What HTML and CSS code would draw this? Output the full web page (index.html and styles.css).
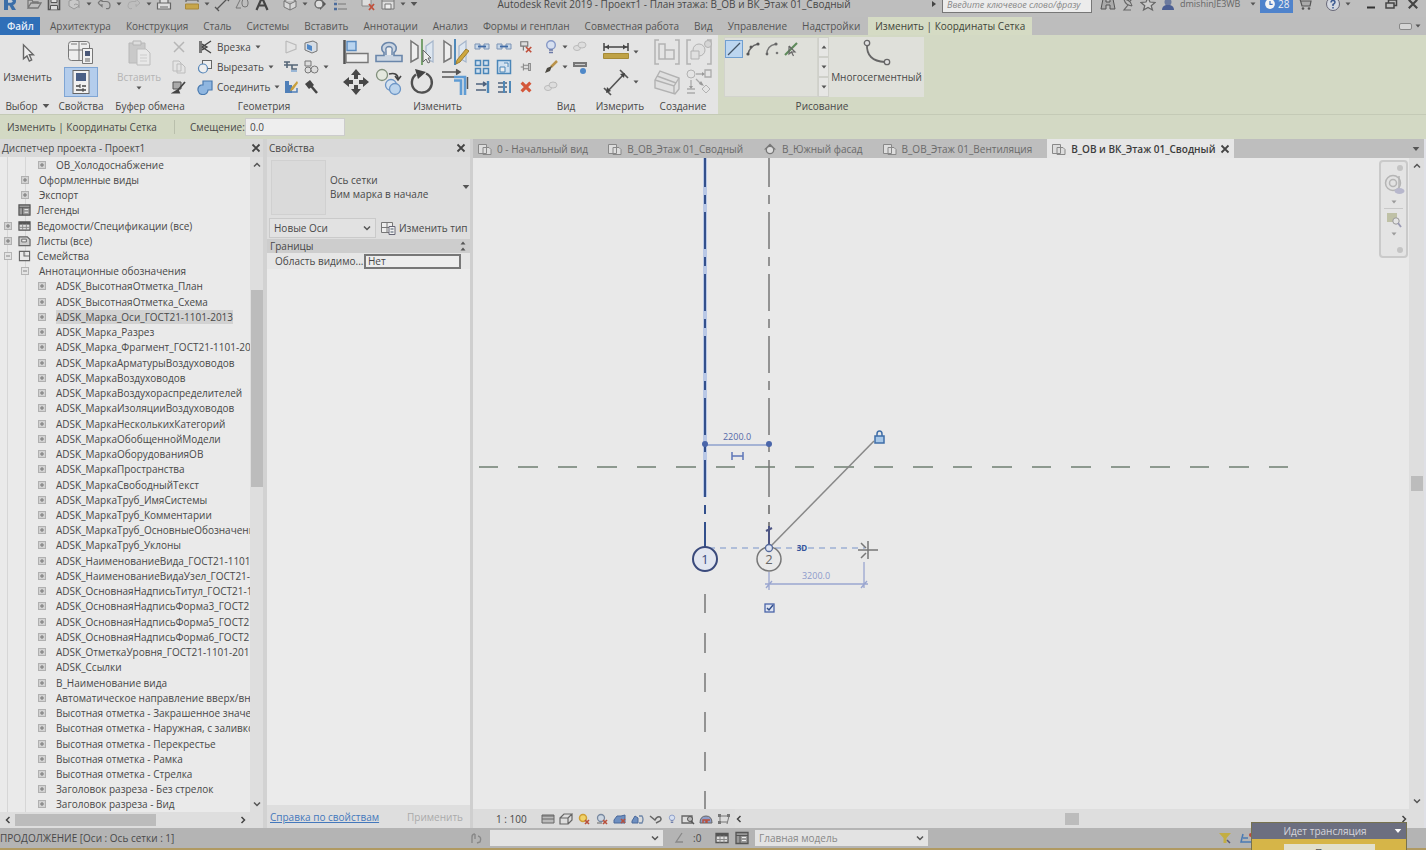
FILE: index.html
```html
<!DOCTYPE html>
<html lang="ru">
<head>
<meta charset="utf-8">
<title>Autodesk Revit 2019 - Проект1</title>
<link rel="stylesheet" href="styles.css">
</head>
<body>
<svg class="sprite" aria-hidden="true">
  <symbol id="caret" viewBox="0 0 6 6"><path d="M0.5 1.5h5L3 4.5z" fill="#555"/></symbol>
  <symbol id="chev-d" viewBox="0 0 8 8"><path d="M1 2.5l3 3 3-3" fill="none" stroke="#555" stroke-width="1.5"/></symbol>
  <symbol id="chev-u" viewBox="0 0 8 8"><path d="M1 5.5l3-3 3 3" fill="none" stroke="#555" stroke-width="1.5"/></symbol>
  <symbol id="chev-l" viewBox="0 0 8 8"><path d="M5.5 1l-3 3 3 3" fill="none" stroke="#444" stroke-width="1.5"/></symbol>
  <symbol id="chev-r" viewBox="0 0 8 8"><path d="M2.5 1l3 3-3 3" fill="none" stroke="#444" stroke-width="1.5"/></symbol>
  <symbol id="x" viewBox="0 0 10 10"><path d="M1.5 1.5l7 7M8.500 1.500l-7 7" stroke="#444" stroke-width="1.8"/></symbol>
  <symbol id="play" viewBox="0 0 8 8"><path d="M2 1l4 3-4 3z" fill="#444"/></symbol>
  <symbol id="plus" viewBox="0 0 8 8"><rect x=".5" y=".5" width="7" height="7" fill="#d2d2d2" stroke="#b0b0b0"/><path d="M2 4h4M4 2v4" stroke="#777"/></symbol>
  <symbol id="minus" viewBox="0 0 8 8"><rect x=".5" y=".5" width="7" height="7" fill="#e4e4e4" stroke="#b4b4b4"/><path d="M2 4h4" stroke="#888"/></symbol>

  <symbol id="logo" viewBox="0 0 16 16"><path d="M2 1h8q4 0 4 4 0 3-3 4l3 5h-4L7.500 9.500H6V14H2z" fill="#3b6ea8"/><path d="M6 4h3q1.500 0 1.500 1.300T9 6.800H6z" fill="#c6cfd8"/></symbol>
  <symbol id="open" viewBox="0 0 16 16"><path d="M2 12V4h4l1 2h5v2M2 12l3-5h10l-3 5z" fill="none" stroke="#777" stroke-width="1.3"/></symbol>
  <symbol id="save" viewBox="0 0 16 16"><path d="M2.500 2.500h11v11h-11z" fill="#b9b9b9" stroke="#555" stroke-width="1.600"/><path d="M5 2.500v4h6v-4M4.500 13.500V9.500h7v4" fill="#ddd" stroke="#555"/></symbol>
  <symbol id="sync" viewBox="0 0 16 16"><path d="M3 5l5-2 5 2v5l-5 3-5-3z" fill="#c9c9c9" stroke="#999"/><path d="M8 9a3 3 0 015 3" fill="none" stroke="#999"/></symbol>
  <symbol id="undo" viewBox="0 0 16 16"><path d="M2 7l4-4v2.500h4q4 0 4 4t-4 3M2 7l4 3.500V8" fill="none" stroke="#777" stroke-width="1.200"/></symbol>
  <symbol id="redo" viewBox="0 0 16 16"><path d="M14 7l-4-4v2.500H6q-4 0-4 4t4 3M14 7l-4 3.500V8" fill="none" stroke="#aaa"/></symbol>
  <symbol id="print" viewBox="0 0 16 16"><path d="M4 7V2h8v5M1.500 7h13v6h-13z" fill="#ddd" stroke="#666" stroke-width="1.200"/><path d="M4 11h8" stroke="#666"/></symbol>
  <symbol id="ruler" viewBox="0 0 16 16"><path d="M2 4h12M2 2v4M14 2v4" stroke="#555"/><path d="M1.500 8h13v5h-13z" fill="#c7a64b" stroke="#a8883a"/></symbol>
  <symbol id="dim" viewBox="0 0 16 16"><path d="M3 13L13 3M1 11l4 4M11 1l4 4" stroke="#555" stroke-width="1.300"/></symbol>
  <symbol id="tag" viewBox="0 0 16 16"><path d="M2 12l4-8M2 12h5" stroke="#777" fill="none"/><rect x="8" y="3" width="6" height="8" rx="3" fill="none" stroke="#777"/></symbol>
  <symbol id="letter" viewBox="0 0 16 16"><path d="M2.500 14L8 1.500 13.500 14M5 9.500h6" fill="none" stroke="#444" stroke-width="2.200"/></symbol>
  <symbol id="cube" viewBox="0 0 16 16"><path d="M2 5l6-3 6 3v6l-6 3-6-3zM2 5l6 3 6-3M8 8v6" fill="#d7d7d7" stroke="#777"/></symbol>
  <symbol id="section" viewBox="0 0 16 16"><path d="M8 2l6 6-6 6z" fill="#555"/><circle cx="7" cy="8" r="4" fill="#ddd" stroke="#666" stroke-width="1.300"/></symbol>
  <symbol id="thin" viewBox="0 0 16 16"><path d="M2 3h3M2 8h3M2 13h3" stroke="#4c6c9c" stroke-width="2.500"/><path d="M6 3h9M6 8h8M6 13h9" stroke="#777"/></symbol>
  <symbol id="closewin" viewBox="0 0 16 16"><path d="M2 3h9v7H2z" fill="#ddd" stroke="#888"/><path d="M9 8l5 6M14 8l-5 6" stroke="#c0503c" stroke-width="1.800"/></symbol>
  <symbol id="switchwin" viewBox="0 0 16 16"><path d="M2 2h12v11H2z" fill="#ddd" stroke="#777"/><path d="M2 5h12M5 8h6v5H5z" fill="#eee" stroke="#777"/></symbol>
  <symbol id="binoc" viewBox="0 0 16 16"><path d="M3 3h3v3h4V3h3l2 10h-5V9H6v4H1z" fill="#aaa" stroke="#555"/></symbol>
  <symbol id="dish" viewBox="0 0 16 16"><path d="M4 3q1 6 8 7M4 3q7 1 8 7M8 9l-4 5h7M10 5l3-3" fill="none" stroke="#666" stroke-width="1.200"/></symbol>
  <symbol id="star" viewBox="0 0 16 16"><path d="M8 1.500l2 4.500 5 .5-3.800 3.200L12.500 14 8 11.500 3.500 14l1.300-4.300L1 6.500 6 6z" fill="#ccc" stroke="#666" stroke-width="1.200"/></symbol>
  <symbol id="user" viewBox="0 0 16 16"><circle cx="8" cy="6" r="3.500" fill="#6c7a9e"/><path d="M2 14q0-4 4-5h4q4 1 4 5z" fill="#4b5e93"/></symbol>
  <symbol id="clock" viewBox="0 0 16 16"><circle cx="8" cy="8" r="6.500" fill="#f4f4f4"/><path d="M8 4v4.500h3.500" fill="none" stroke="#3f72c0" stroke-width="1.600"/></symbol>
  <symbol id="cart" viewBox="0 0 16 16"><path d="M1 3h2l2 7h8l1-5H4" fill="#aaa" stroke="#555" stroke-width="1.200"/><circle cx="6" cy="12.500" r="1.300" fill="#555"/><circle cx="12" cy="12.500" r="1.300" fill="#555"/></symbol>
  <symbol id="help" viewBox="0 0 16 16"><circle cx="8" cy="8" r="6.500" fill="#d4d8e0" stroke="#667"/><path d="M6 6.500q0-2 2-2t2 1.800Q10 7.500 8 8.500V10M8 11v1.500" fill="none" stroke="#3c5a90" stroke-width="1.500"/></symbol>
  <symbol id="min" viewBox="0 0 16 16"><path d="M4 11.500h8" stroke="#333" stroke-width="2"/></symbol>
  <symbol id="restore" viewBox="0 0 16 16"><path d="M3 7h8v5H3zM5.500 7V4h8v5.500H11" fill="none" stroke="#444" stroke-width="1.500"/></symbol>

  <symbol id="cursor" viewBox="0 0 20 24"><path d="M7 5v12l3-2.500 2 4.500 2-1-2-4.500h3.500z" fill="#eee" stroke="#666" stroke-width="1.200"/></symbol>
  <symbol id="famtype" viewBox="0 0 28 26"><rect x="1.500" y="2.500" width="21" height="19" rx="3" fill="#eee" stroke="#777"/><path d="M12 2.500v19M1.500 11h21M4 5h6M14 5h6" stroke="#777" fill="none"/><path d="M15.500 9.500h10v15h-10z" fill="#f1f1f1" stroke="#777"/><path d="M18 12h5v5h-5z" fill="#4a5878"/><path d="M18 20h5M18 22h5" stroke="#666"/></symbol>
  <symbol id="props" viewBox="0 0 28 28"><rect x="6" y="2.500" width="16" height="23" fill="#f1f1f1" stroke="#666"/><path d="M9 5h10v8H9z" fill="#4a5f86"/><path d="M9 18h4M15 18h4M9 22h10" stroke="#444" stroke-width="1.300"/><path d="M13 16v4M16 20v4" stroke="#444"/></symbol>
  <symbol id="paste" viewBox="0 0 26 28"><path d="M3 4h16v20H3z" fill="#c9c9c9" stroke="#b8b8b8"/><path d="M7 2h8v4H7z" fill="#ddd" stroke="#b5b5b5"/><path d="M11 10h9l4 4v12H11z" fill="#e8e8e8" stroke="#bcbcbc"/><path d="M14 16h7M14 19h7M14 22h7" stroke="#ccc"/></symbol>
  <symbol id="cutx" viewBox="0 0 16 16"><path d="M3 3l10 10M13 3L3 13" stroke="#b6b6b6" stroke-width="1.500"/></symbol>
  <symbol id="copyg" viewBox="0 0 16 16"><path d="M2 2h6l2 2v8H2zM6 5h5l3 3v6H6z" fill="#e4e4e4" stroke="#bcbcbc"/></symbol>
  <symbol id="match" viewBox="0 0 16 16"><path d="M2 3h8v7H2z" fill="#aaa" stroke="#555"/><path d="M14 3l-7 8M7 11l-4 2.500h5z" stroke="#444" stroke-width="1.800" fill="#555"/></symbol>
  <symbol id="cope" viewBox="0 0 16 16"><path d="M2 2h3v12H2z" fill="#777"/><path d="M5 8l9-6M5 8l9 6M5 5l5 3-5 3" fill="#999" stroke="#444" stroke-width="1.400"/></symbol>
  <symbol id="cutgeo" viewBox="0 0 16 16"><rect x="5.500" y="1.500" width="9" height="8" fill="#eee" stroke="#666"/><circle cx="6" cy="9.500" r="4.500" fill="#eee" stroke="#5686b8" stroke-width="1.200"/></symbol>
  <symbol id="join" viewBox="0 0 16 16"><path d="M6 2h9v9h-4a5 5 0 11-7-5h2z" fill="#8fb6e0" stroke="#4b7bb0" stroke-width="1.200"/></symbol>
  <symbol id="face" viewBox="0 0 16 16"><path d="M3 2v12M3 2l10 4v4L3 14" fill="none" stroke="#bbb" stroke-width="1.200"/></symbol>
  <symbol id="cubeblue" viewBox="0 0 16 16"><path d="M2 4l8-2 4 2v8l-5 2-7-3z" fill="#d6dde5" stroke="#777"/><path d="M4 5l5 2v5l-5-2z" fill="#4f88c8"/></symbol>
  <symbol id="beam" viewBox="0 0 16 16"><path d="M1 3h6M1 6h14M4 3v6M9 6v4h5" fill="none" stroke="#567" stroke-width="1.600"/><path d="M8 12h6" stroke="#4f88c8"/></symbol>
  <symbol id="shapes" viewBox="0 0 16 16"><path d="M2 2h6v5H2z" fill="#ddd" stroke="#777"/><circle cx="5" cy="11" r="3" fill="#ddd" stroke="#777"/><circle cx="11.500" cy="10.500" r="3.500" fill="#ddd" stroke="#777"/></symbol>
  <symbol id="paint" viewBox="0 0 16 16"><path d="M2 2h4v4h3v8H2z" fill="#4f7fb8"/><path d="M7 13h7V9" fill="none" stroke="#4f7fb8" stroke-width="1.500"/><path d="M14 2L8 9l-1 3 3-1 5-7z" fill="#c9a03c"/></symbol>
  <symbol id="hammer" viewBox="0 0 16 16"><path d="M2 5l5-4 4 5-5 4z" fill="#444"/><path d="M8 7l6 7" stroke="#444" stroke-width="2.500"/></symbol>

  <symbol id="align" viewBox="0 0 28 28"><path d="M2.500 2v24" stroke="#555" stroke-width="2.500"/><path d="M5 3.500h9v9H5z" fill="#b9d4ef" stroke="#5a8bc0" stroke-width="1.400"/><path d="M4 15.500h22v9H4z" fill="#eee" stroke="#777" stroke-width="1.400"/></symbol>
  <symbol id="offset" viewBox="0 0 28 28"><path d="M1 17.500h8v-3q-3-2-2-6 2-4 7-4t7 4q1 4-2 6v3h8v6H1z" fill="#ccd6e2" stroke="#6a86aa" stroke-width="1.600"/><path d="M11 17v-4q-1-4 3-4.500 4 .5 3 4.500v4" fill="#eee" stroke="#6a86aa" stroke-width="1.400"/></symbol>
  <symbol id="mirpick" viewBox="0 0 28 28"><path d="M3 3l7 5v12l-7 4z" fill="#eee" stroke="#777" stroke-width="1.500"/><path d="M25 3l-7 5v12l7 4z" fill="#dde6f0" stroke="#a5b6cb" stroke-width="1.200"/><path d="M14 1v26" stroke="#6c9a62" stroke-width="1.800"/><path d="M15 12v12l3-3 2 4 2-1-2-4h3z" fill="#eee" stroke="#666"/></symbol>
  <symbol id="mirdraw" viewBox="0 0 28 28"><path d="M3 3l7 5v12l-7 4z" fill="#eee" stroke="#777" stroke-width="1.500"/><path d="M25 3l-7 5v12l7 4z" fill="#dde6f0" stroke="#a5b6cb" stroke-width="1.200"/><path d="M14 1v26" stroke="#4f88b8" stroke-width="2"/><path d="M25 11l3 2-9 11-4 2 1-4z" fill="#cfa83d" stroke="#9a7d35"/></symbol>
  <symbol id="move" viewBox="0 0 28 28"><path d="M14 1l5 6h-3v4h-4V7H9zM14 27l5-6h-3v-4h-4v4H9zM1 14l6-5v3h4v4H7v3zM27 14l-6-5v3h-4v4h4v3z" fill="#484848"/></symbol>
  <symbol id="copyb" viewBox="0 0 28 28"><circle cx="7" cy="7" r="5.500" fill="#e4e8de" stroke="#81907c" stroke-width="1.300"/><path d="M14 6q9-2 9 5M20 8l3 4 3-4" fill="none" stroke="#444" stroke-width="1.600"/><circle cx="16" cy="17" r="5.500" fill="#d5e2f0" stroke="#6c95c5" stroke-width="1.300"/><circle cx="20" cy="21" r="5.500" fill="#bcd4ec" stroke="#6c95c5" stroke-width="1.300"/></symbol>
  <symbol id="rotate" viewBox="0 0 28 28"><path d="M18 5.500A10 10 0 118 6.500" fill="none" stroke="#505050" stroke-width="2.400"/><path d="M7 1l11 3-8 7z" fill="#444"/></symbol>
  <symbol id="trim" viewBox="0 0 28 28"><path d="M1 9h14M12 4h2M1 4h13l4 0" stroke="#555" stroke-width="1.700"/><path d="M13 9h11v18M13 12.500h7V27" fill="none" stroke="#5f9cd4" stroke-width="2.600"/><path d="M26.500 9v12M15 1.500L19 4l-4 2.500" stroke="#555" stroke-width="1.500" fill="#555"/></symbol>
  <symbol id="split" viewBox="0 0 16 16"><path d="M1 5h5v5H1zM10 5h5v5h-5z" fill="#c9d8e8" stroke="#7a93b5"/><path d="M4 7.500h8" stroke="#3f6aa5" stroke-width="1.800"/></symbol>
  <symbol id="unpinx" viewBox="0 0 16 16"><path d="M2 2h8v5H2zM5 7v5" fill="#ddd" stroke="#777" stroke-width="1.300"/><path d="M8 8l6 6M14 8l-6 6" stroke="#c0503c" stroke-width="2"/></symbol>
  <symbol id="array" viewBox="0 0 16 16"><path d="M1.500 1.500h5v5h-5zM9.500 1.500h5v5h-5zM1.500 9.500h5v5h-5zM9.500 9.500h5v5h-5z" fill="#cfe0f0" stroke="#4b86b8" stroke-width="1.500"/></symbol>
  <symbol id="scale" viewBox="0 0 16 16"><path d="M1.500 1.500h13v13h-13z" fill="#cfe0f0" stroke="#4b86b8" stroke-width="1.500"/><path d="M4 8h5v5H4zM8 4h4v4" fill="#eee" stroke="#4b86b8"/></symbol>
  <symbol id="pin" viewBox="0 0 16 16"><path d="M2 8h3M5 4v8M5 6h6v4H5M11 4v8h2V4z" fill="#ddd" stroke="#888" stroke-width="1.200"/></symbol>
  <symbol id="trim1" viewBox="0 0 16 16"><path d="M2 5h9M2 11h10M9 3l3 2-3 2" fill="none" stroke="#4d617c" stroke-width="1.600"/><path d="M14 2v12" stroke="#4f88b8" stroke-width="2.400"/></symbol>
  <symbol id="trim2" viewBox="0 0 16 16"><path d="M2 4h9M2 8h9M2 13h9" fill="none" stroke="#4d617c" stroke-width="1.600"/><path d="M14 2v12M8 2v12" stroke="#4f88b8" stroke-width="2"/></symbol>
  <symbol id="redx" viewBox="0 0 16 16"><path d="M3 3l10 10M13 3L3 13" stroke="#d4573a" stroke-width="3.600"/></symbol>
  <symbol id="bulb" viewBox="0 0 16 16"><circle cx="8" cy="6" r="4.300" fill="#d7e0f0" stroke="#8698c6" stroke-width="1.400"/><path d="M6 11h4M6 13.500h4" stroke="#6c7aa6" stroke-width="1.600"/></symbol>
  <symbol id="chain" viewBox="0 0 16 16"><ellipse cx="5" cy="9" rx="3.500" ry="2.500" fill="#ddd" stroke="#bbb"/><ellipse cx="10" cy="6" rx="4" ry="3" fill="#ddd" stroke="#bbb"/></symbol>
  <symbol id="brush" viewBox="0 0 16 16"><path d="M14 2l-6 6" stroke="#b9924a" stroke-width="2.500"/><path d="M9 7l-2 5-5 2 2-5z" fill="#4d4a42"/></symbol>
  <symbol id="linework" viewBox="0 0 16 16"><path d="M1 3h14v5H1z" fill="#777"/><path d="M3 5.500h10" stroke="#ccc"/><circle cx="11" cy="12" r="3" fill="#4f88c8"/></symbol>
  <symbol id="bigruler" viewBox="0 0 28 28"><path d="M2 9h24M2 5v8M26 5v8" stroke="#444" stroke-width="1.500"/><path d="M3 9l4-2.500v5zM25 9l-4-2.500v5z" fill="#444"/><path d="M1.500 15.500h25v5h-25z" fill="#bfa246" stroke="#a58a36"/></symbol>
  <symbol id="bigdim" viewBox="0 0 28 28"><path d="M5 24L22 6M2 20l7 7M18 2l8 8" stroke="#555" stroke-width="1.700"/><path d="M4 25l1-6 4 4zM23 5l-5 1 4 4z" fill="#444"/></symbol>
  <symbol id="asm" viewBox="0 0 28 28"><path d="M6 2H2v24h4M22 2h4v24h-4M6 6h6v6h9v9H6zM12 12v9" fill="none" stroke="#b2b2b2" stroke-width="1.500"/></symbol>
  <symbol id="group" viewBox="0 0 28 28"><path d="M6 2H2v24h4M22 2h4v24h-4" fill="none" stroke="#b2b2b2" stroke-width="1.500"/><circle cx="14" cy="12" r="6" fill="#e0e0e0" stroke="#b2b2b2"/><path d="M6 13h8v8H6z" fill="#e0e0e0" stroke="#b2b2b2"/><circle cx="23" cy="6" r="3.500" fill="#d5d5d5" stroke="#b2b2b2"/></symbol>
  <symbol id="parts" viewBox="0 0 28 28"><path d="M2 12l5-9 19 7v11l-4 5-20-6z" fill="#e0e0e0" stroke="#b2b2b2" stroke-width="1.400"/><path d="M2 12l19 6 5-8M21 18v8M4 8l19 7" fill="none" stroke="#b2b2b2" stroke-width="1.400"/></symbol>
  <symbol id="similar" viewBox="0 0 28 28"><circle cx="6" cy="6" r="4" fill="none" stroke="#b2b2b2"/><path d="M20 2h6v7h-6zM11 6h7M6 12v7M11 11l6 6M2 21h8M2 25h8" fill="none" stroke="#aaa" stroke-width="1.300"/><path d="M21 17l4 4-4 4-4-4z" fill="none" stroke="#b2b2b2"/><path d="M17 4l3 2-3 2zM4 18l2 3 2-3zM16 13l3 5-5-2z" fill="#999"/></symbol>
  <symbol id="dline" viewBox="0 0 16 16"><path d="M2 14L14 2" stroke="#456" stroke-width="1.300"/></symbol>
  <symbol id="darc" viewBox="0 0 16 16"><path d="M3 14Q4 5 13 3" fill="none" stroke="#666" stroke-width="1.400"/><circle cx="3" cy="13" r="1.600" fill="#555"/><circle cx="6" cy="6" r="1.500" fill="#555"/><circle cx="13" cy="3" r="1.600" fill="#555"/></symbol>
  <symbol id="darc2" viewBox="0 0 16 16"><path d="M3 14Q2 5 12 3" fill="none" stroke="#777" stroke-width="1.300"/><circle cx="12" cy="3" r="1.600" fill="#666"/><circle cx="13" cy="12" r="1.300" fill="#777"/><circle cx="3" cy="13" r="1.400" fill="#666"/></symbol>
  <symbol id="dpick" viewBox="0 0 16 16"><path d="M2 14L14 2" stroke="#5e8a5a" stroke-width="2.200"/><path d="M6 5v8l2.500-2 2 4M6 5l6 6H8" fill="none" stroke="#666" stroke-width="1.200"/></symbol>
  <symbol id="multi" viewBox="0 0 28 28"><path d="M4 5q-1 17 18 18" fill="none" stroke="#666" stroke-width="1.800"/><circle cx="4" cy="4" r="2.700" fill="#e2e2e2" stroke="#666" stroke-width="1.300"/><circle cx="24" cy="23" r="2.700" fill="#e2e2e2" stroke="#666" stroke-width="1.300"/></symbol>

  <symbol id="sheet" viewBox="0 0 14 12"><path d="M.5 1.500h8v9h-8zM5 4.500h6l2 2v5H5z" fill="#ddd" stroke="#888"/></symbol>
  <symbol id="elev" viewBox="0 0 14 12"><path d="M1 6.500l6-6 6 6z" fill="#777"/><circle cx="7" cy="7" r="3.700" fill="#ddd" stroke="#777" stroke-width="1.300"/></symbol>
  <symbol id="legend" viewBox="0 0 14 13"><path d="M1 1h12v11H1z" fill="#999" stroke="#555" stroke-width="1.300"/><path d="M1 4h12M5 4v8" stroke="#555"/><path d="M7 6h4M7 9h4" stroke="#eee"/></symbol>
  <symbol id="sched" viewBox="0 0 14 13"><path d="M1 2h12v9H1z" fill="#ddd" stroke="#555" stroke-width="1.300"/><path d="M1 3.500h12" stroke="#555" stroke-width="3"/><path d="M1 8h12M5 4v7M9 4v7" stroke="#888"/></symbol>
  <symbol id="sheets" viewBox="0 0 14 13"><path d="M1 2h9l3 3v6.500H1z" fill="#ccc" stroke="#666" stroke-width="1.300"/><path d="M4 4.500h5v3H4z" fill="#eee" stroke="#666"/></symbol>
  <symbol id="fam" viewBox="0 0 14 13"><path d="M1.500 1.500h11v10h-11zM6.500 1.500v5h6" fill="#e8e8e8" stroke="#666" stroke-width="1.200"/></symbol>
  <symbol id="edittype" viewBox="0 0 16 16"><path d="M1.500 2.500h11v10h-11zM7 2.500v10M1.500 7.500h11" fill="#eee" stroke="#777"/><path d="M9 6.500h6v8H9z" fill="#f1f1f1" stroke="#667"/><path d="M10.500 9h3M10.500 12h3" stroke="#456"/></symbol>

  <symbol id="detail" viewBox="0 0 14 12"><path d="M1 2h12v8H1z" fill="#bbb" stroke="#666"/><path d="M1 3h12M1 6h12" stroke="#666"/></symbol>
  <symbol id="visual" viewBox="0 0 14 12"><path d="M1 5h8v6H1zM1 5l4-4h8L9 5M13 1v6l-4 4" fill="#ddd" stroke="#666" stroke-width="1.200"/></symbol>
  <symbol id="sun" viewBox="0 0 14 12"><circle cx="6" cy="5" r="3.500" fill="#f0d36a" stroke="#cf9f35" stroke-width="1.500"/><path d="M8 7l4 4M12 7l-4 4" stroke="#b8503c" stroke-width="1.600"/></symbol>
  <symbol id="shadow" viewBox="0 0 14 12"><circle cx="6" cy="5" r="3.500" fill="#ccd6e2" stroke="#7888a0" stroke-width="1.300"/><path d="M2 10h5" stroke="#666"/><path d="M8 7l4 4M12 7l-4 4" stroke="#b8503c" stroke-width="1.600"/></symbol>
  <symbol id="crop" viewBox="0 0 14 12"><path d="M1 7l3-4h4l4-1v8H1z" fill="#6e8fc0" stroke="#4a689a"/><path d="M8 6l4 4M12 6L8 10" stroke="#b8503c" stroke-width="1.500"/></symbol>
  <symbol id="cropb" viewBox="0 0 14 12"><path d="M1 8l3-5 3 2v5H1z" fill="#6e8fc0" stroke="#4a689a"/><path d="M8 3h3q2 3 0 7H8" fill="none" stroke="#6e86a8" stroke-width="1.300"/></symbol>
  <symbol id="glasses" viewBox="0 0 14 12"><path d="M1 3l5 4q2-4 5-3 2 2 0 4l-4 2" fill="none" stroke="#666" stroke-width="1.500"/></symbol>
  <symbol id="tmp" viewBox="0 0 14 12"><path d="M1 3h10v7H1z" fill="#ddd" stroke="#666" stroke-width="1.300"/><circle cx="9" cy="6" r="2.500" fill="#bbb" stroke="#555"/><path d="M10 8l3 3" stroke="#555" stroke-width="1.400"/></symbol>
  <symbol id="constr" viewBox="0 0 14 12"><path d="M1 10q0-7 6-7 6 0 6 7z" fill="#8d9cc8" stroke="#666"/><path d="M4 10V7h3v3M8 10V7h3" stroke="#b8503c" fill="none" stroke-width="1.400"/></symbol>
  <symbol id="region" viewBox="0 0 14 12"><path d="M3 3h9M3 3v6M3 9h7M12 3l-2 8" fill="none" stroke="#777"/><path d="M1 1h3v3H1zM10 1h3v3h-3zM1 8h3v3H1z" fill="#777"/></symbol>
  <symbol id="press" viewBox="0 0 14 12"><path d="M2 11V5q0-3 3-3M5 2v5M8 4q4 1 2 6L7 11" fill="none" stroke="#888" stroke-width="1.400"/></symbol>
  <symbol id="angle" viewBox="0 0 14 12"><path d="M9 1L3 10h7" fill="none" stroke="#888" stroke-width="1.300"/></symbol>
  <symbol id="filter" viewBox="0 0 14 12"><path d="M1 1h12L8.500 6v5h-3V6z" fill="#c3ae43"/><path d="M9 8l3 3" stroke="#557" stroke-width="1.500"/></symbol>
  <symbol id="selx" viewBox="0 0 14 12"><path d="M3 2l-2 8h10M3 6h5" fill="none" stroke="#4a7ab4" stroke-width="1.500"/><circle cx="11" cy="3" r="2" fill="#c04a3c"/></symbol>
  <symbol id="wheel" viewBox="0 0 22 22"><circle cx="10" cy="9" r="7.500" fill="#e2e2e2" stroke="#b5b5b5" stroke-width="1.500"/><circle cx="10" cy="9" r="3.500" fill="none" stroke="#b5b5b5" stroke-width="1.500"/><path d="M16 2v12" stroke="#b5b5b5" stroke-width="1.500"/><ellipse cx="16.500" cy="17" rx="5" ry="3" fill="#b7b7cc"/></symbol>
  <symbol id="zoomr" viewBox="0 0 16 16"><path d="M1 1h10v9H1z" fill="#bfc1a6"/><circle cx="10" cy="9" r="3.200" fill="#e4e4e4" stroke="#999"/><path d="M12 11l3 4" stroke="#9a9ab4" stroke-width="1.800"/></symbol>
</svg>

<header class="titlebar">
  <div class="title-row">
    <nav class="qat" aria-label="Быстрый доступ">
      <svg class="i16"><use href="#logo"/></svg>
      <svg class="i16 sep-s"><use href="#open"/></svg>
      <svg class="i16"><use href="#save"/></svg>
      <svg class="i16"><use href="#sync"/></svg>
      <svg class="i6"><use href="#caret"/></svg>
      <svg class="i16"><use href="#undo"/></svg>
      <svg class="i6"><use href="#caret"/></svg>
      <svg class="i16"><use href="#redo"/></svg>
      <svg class="i6"><use href="#caret"/></svg>
      <svg class="i16"><use href="#print"/></svg>
      <svg class="i16 sep"><use href="#ruler"/></svg>
      <svg class="i6"><use href="#caret"/></svg>
      <svg class="i16"><use href="#dim"/></svg>
      <svg class="i16"><use href="#tag"/></svg>
      <svg class="i16"><use href="#letter"/></svg>
      <svg class="i16 sep"><use href="#cube"/></svg>
      <svg class="i6"><use href="#caret"/></svg>
      <svg class="i16"><use href="#section"/></svg>
      <svg class="i16"><use href="#thin"/></svg>
      <svg class="i16 sep"><use href="#closewin"/></svg>
      <svg class="i16"><use href="#switchwin"/></svg>
      <svg class="i6"><use href="#caret"/></svg>
      <svg class="i8"><use href="#caret"/></svg>
    </nav>
    <div class="app-title">Autodesk Revit 2019 - Проект1 - План этажа: В_ОВ и ВК_Этаж 01_Сводный</div>
    <div class="infocenter">
      <svg class="i8"><use href="#play"/></svg>
      <input class="search" type="text" aria-label="Поиск" placeholder="Введите ключевое слово/фразу">
      <svg class="i16 sep-s"><use href="#binoc"/></svg>
      <svg class="i16"><use href="#dish"/></svg>
      <svg class="i16"><use href="#star"/></svg>
      <svg class="i16"><use href="#user"/></svg>
      <span class="username">dmishinJE3WB</span>
      <svg class="i6"><use href="#caret"/></svg>
      <button class="trial"><svg class="i12"><use href="#clock"/></svg>28</button>
      <svg class="i16"><use href="#cart"/></svg>
      <svg class="i16 sep"><use href="#help"/></svg>
      <svg class="i6"><use href="#caret"/></svg>
      <svg class="i16 sep"><use href="#min"/></svg>
      <svg class="i16"><use href="#restore"/></svg>
      <svg class="i12 sep-s"><use href="#x"/></svg>
    </div>
  </div>
</header>

<nav class="tabs" aria-label="Вкладки ленты">
  <button class="tab file">Файл</button>
  <button class="tab">Архитектура</button>
  <button class="tab">Конструкция</button>
  <button class="tab">Сталь</button>
  <button class="tab">Системы</button>
  <button class="tab">Вставить</button>
  <button class="tab">Аннотации</button>
  <button class="tab">Анализ</button>
  <button class="tab">Формы и генплан</button>
  <button class="tab">Совместная работа</button>
  <button class="tab">Вид</button>
  <button class="tab">Управление</button>
  <button class="tab">Надстройки</button>
  <button class="tab active">Изменить | Координаты Сетка</button>
  <span class="tab-toggle"><i class="pill"></i><svg class="i6"><use href="#caret"/></svg></span>
</nav>

<section class="ribbon">
  <div class="panel p-pick">
    <div class="tools col"><button class="big"><svg class="bigicon"><use href="#cursor"/></svg>Изменить</button></div>
    <h2>Выбор <svg class="i8"><use href="#caret"/></svg></h2>
  </div>
  <div class="panel p-props">
    <div class="tools col">
      <button class="toggle" aria-label="Типоразмеры"><svg class="i28"><use href="#famtype"/></svg></button>
      <button class="toggle on" aria-label="Свойства"><svg class="i28"><use href="#props"/></svg></button>
    </div>
    <h2>Свойства</h2>
  </div>
  <div class="panel p-clip">
    <div class="tools">
      <button class="big dim" disabled><svg class="bigicon"><use href="#paste"/></svg>Вставить<svg class="i6"><use href="#caret"/></svg></button>
      <div class="small-grid one"><svg class="i16"><use href="#cutx"/></svg><svg class="i16"><use href="#copyg"/></svg><svg class="i16"><use href="#match"/></svg></div>
    </div>
    <h2>Буфер обмена</h2>
  </div>
  <div class="panel p-geo">
    <div class="tools">
      <div class="cmds">
        <button><svg class="i16"><use href="#cope"/></svg>Врезка<svg class="i6"><use href="#caret"/></svg></button>
        <button><svg class="i16"><use href="#cutgeo"/></svg>Вырезать<svg class="i6"><use href="#caret"/></svg></button>
        <button><svg class="i16"><use href="#join"/></svg>Соединить<svg class="i6"><use href="#caret"/></svg></button>
      </div>
      <div class="small-grid three">
        <svg class="i16"><use href="#face"/></svg><svg class="i16"><use href="#cubeblue"/></svg><span></span>
        <svg class="i16"><use href="#beam"/></svg><svg class="i16"><use href="#shapes"/></svg><svg class="i6"><use href="#caret"/></svg>
        <svg class="i16"><use href="#paint"/></svg><svg class="i16"><use href="#hammer"/></svg><span></span>
      </div>
    </div>
    <h2>Геометрия</h2>
  </div>
  <div class="panel p-mod">
    <div class="tools">
      <div class="big-grid four">
        <svg class="i28"><use href="#align"/></svg><svg class="i28"><use href="#offset"/></svg><svg class="i28"><use href="#mirpick"/></svg><svg class="i28"><use href="#mirdraw"/></svg>
        <svg class="i28"><use href="#move"/></svg><svg class="i28"><use href="#copyb"/></svg><svg class="i28"><use href="#rotate"/></svg><svg class="i28"><use href="#trim"/></svg>
      </div>
      <div class="small-grid cells">
        <svg class="i16"><use href="#split"/></svg><svg class="i16"><use href="#split"/></svg><svg class="i14"><use href="#unpinx"/></svg>
        <svg class="i16"><use href="#array"/></svg><svg class="i16"><use href="#scale"/></svg><svg class="i14"><use href="#pin"/></svg>
        <svg class="i16"><use href="#trim1"/></svg><svg class="i16"><use href="#trim2"/></svg><svg class="i14"><use href="#redx"/></svg>
      </div>
    </div>
    <h2>Изменить</h2>
  </div>
  <div class="panel p-view">
    <div class="tools">
      <div class="small-grid viewgrid">
        <svg class="i16"><use href="#bulb"/></svg><svg class="i6"><use href="#caret"/></svg><svg class="i16"><use href="#chain"/></svg>
        <svg class="i16"><use href="#brush"/></svg><svg class="i6"><use href="#caret"/></svg><svg class="i16"><use href="#linework"/></svg>
        <svg class="i16"><use href="#chain"/></svg><span></span><span></span>
      </div>
    </div>
    <h2>Вид</h2>
  </div>
  <div class="panel p-meas">
    <div class="tools">
      <div class="big-grid meas">
        <svg class="i28"><use href="#bigruler"/></svg><svg class="i6"><use href="#caret"/></svg>
        <svg class="i28"><use href="#bigdim"/></svg><svg class="i6"><use href="#caret"/></svg>
      </div>
    </div>
    <h2>Измерить</h2>
  </div>
  <div class="panel p-make">
    <div class="tools">
      <div class="big-grid two">
        <svg class="i28"><use href="#asm"/></svg><svg class="i28"><use href="#group"/></svg>
        <svg class="i28"><use href="#parts"/></svg><svg class="i28"><use href="#similar"/></svg>
      </div>
    </div>
    <h2>Создание</h2>
  </div>
  <div class="panel p-draw">
    <div class="tools">
      <div class="gallery">
        <button class="on" aria-label="Линия"><svg class="i16"><use href="#dline"/></svg></button>
        <button aria-label="Дуга по трем точкам"><svg class="i16"><use href="#darc"/></svg></button>
        <button aria-label="Дуга по центру"><svg class="i16"><use href="#darc2"/></svg></button>
        <button aria-label="Выбрать линии"><svg class="i16"><use href="#dpick"/></svg></button>
      </div>
      <div class="gal-scroll">
        <button aria-label="Вверх"><svg class="i6 flip"><use href="#caret"/></svg></button>
        <button aria-label="Вниз"><svg class="i6"><use href="#caret"/></svg></button>
        <button aria-label="Развернуть"><svg class="i6"><use href="#caret"/></svg></button>
      </div>
      <button class="big multi"><svg class="bigicon"><use href="#multi"/></svg>Многосегментный</button>
    </div>
    <h2>Рисование</h2>
  </div>
</section>

<section class="options">
  <span class="mode">Изменить | Координаты Сетка</span>
  <label for="offset-in">Смещение:</label>
  <input id="offset-in" type="text" value="0.0">
</section>

<main class="work">
  <aside class="browser">
    <h3 class="pane-head">Диспетчер проекта - Проект1<button aria-label="Закрыть"><svg class="i10"><use href="#x"/></svg></button></h3>
    <div class="tree-wrap">
      <ul class="tree">
        <li class="l2"><svg class="i8"><use href="#plus"/></svg><span>ОВ_Холодоснабжение</span></li>
        <li class="l1"><svg class="i8"><use href="#plus"/></svg><span>Оформленные виды</span></li>
        <li class="l1"><svg class="i8"><use href="#plus"/></svg><span>Экспорт</span></li>
        <li class="l0"><i class="nobox"></i><svg class="i13"><use href="#legend"/></svg><span>Легенды</span></li>
        <li class="l0"><svg class="i8"><use href="#plus"/></svg><svg class="i13"><use href="#sched"/></svg><span>Ведомости/Спецификации (все)</span></li>
        <li class="l0"><svg class="i8"><use href="#plus"/></svg><svg class="i13"><use href="#sheets"/></svg><span>Листы (все)</span></li>
        <li class="l0"><svg class="i8"><use href="#minus"/></svg><svg class="i13"><use href="#fam"/></svg><span>Семейства</span></li>
        <li class="l1"><svg class="i8"><use href="#minus"/></svg><span>Аннотационные обозначения</span></li>
        <li class="l2"><svg class="i8"><use href="#plus"/></svg><span>ADSK_ВысотнаяОтметка_План</span></li>
        <li class="l2"><svg class="i8"><use href="#plus"/></svg><span>ADSK_ВысотнаяОтметка_Схема</span></li>
        <li class="l2 sel"><svg class="i8"><use href="#plus"/></svg><span>ADSK_Марка_Оси_ГОСТ21-1101-2013</span></li>
        <li class="l2"><svg class="i8"><use href="#plus"/></svg><span>ADSK_Марка_Разрез</span></li>
        <li class="l2"><svg class="i8"><use href="#plus"/></svg><span>ADSK_Марка_Фрагмент_ГОСТ21-1101-20</span></li>
        <li class="l2"><svg class="i8"><use href="#plus"/></svg><span>ADSK_МаркаАрматурыВоздуховодов</span></li>
        <li class="l2"><svg class="i8"><use href="#plus"/></svg><span>ADSK_МаркаВоздуховодов</span></li>
        <li class="l2"><svg class="i8"><use href="#plus"/></svg><span>ADSK_МаркаВоздухораспределителей</span></li>
        <li class="l2"><svg class="i8"><use href="#plus"/></svg><span>ADSK_МаркаИзоляцииВоздуховодов</span></li>
        <li class="l2"><svg class="i8"><use href="#plus"/></svg><span>ADSK_МаркаНесколькихКатегорий</span></li>
        <li class="l2"><svg class="i8"><use href="#plus"/></svg><span>ADSK_МаркаОбобщеннойМодели</span></li>
        <li class="l2"><svg class="i8"><use href="#plus"/></svg><span>ADSK_МаркаОборудованияОВ</span></li>
        <li class="l2"><svg class="i8"><use href="#plus"/></svg><span>ADSK_МаркаПространства</span></li>
        <li class="l2"><svg class="i8"><use href="#plus"/></svg><span>ADSK_МаркаСвободныйТекст</span></li>
        <li class="l2"><svg class="i8"><use href="#plus"/></svg><span>ADSK_МаркаТруб_ИмяСистемы</span></li>
        <li class="l2"><svg class="i8"><use href="#plus"/></svg><span>ADSK_МаркаТруб_Комментарии</span></li>
        <li class="l2"><svg class="i8"><use href="#plus"/></svg><span>ADSK_МаркаТруб_ОсновныеОбозначени</span></li>
        <li class="l2"><svg class="i8"><use href="#plus"/></svg><span>ADSK_МаркаТруб_Уклоны</span></li>
        <li class="l2"><svg class="i8"><use href="#plus"/></svg><span>ADSK_НаименованиеВида_ГОСТ21-1101-</span></li>
        <li class="l2"><svg class="i8"><use href="#plus"/></svg><span>ADSK_НаименованиеВидаУзел_ГОСТ21-1</span></li>
        <li class="l2"><svg class="i8"><use href="#plus"/></svg><span>ADSK_ОсновнаяНадписьТитул_ГОСТ21-1</span></li>
        <li class="l2"><svg class="i8"><use href="#plus"/></svg><span>ADSK_ОсновнаяНадписьФорма3_ГОСТ21</span></li>
        <li class="l2"><svg class="i8"><use href="#plus"/></svg><span>ADSK_ОсновнаяНадписьФорма5_ГОСТ21</span></li>
        <li class="l2"><svg class="i8"><use href="#plus"/></svg><span>ADSK_ОсновнаяНадписьФорма6_ГОСТ21</span></li>
        <li class="l2"><svg class="i8"><use href="#plus"/></svg><span>ADSK_ОтметкаУровня_ГОСТ21-1101-201</span></li>
        <li class="l2"><svg class="i8"><use href="#plus"/></svg><span>ADSK_Ссылки</span></li>
        <li class="l2"><svg class="i8"><use href="#plus"/></svg><span>В_Наименование вида</span></li>
        <li class="l2"><svg class="i8"><use href="#plus"/></svg><span>Автоматическое направление вверх/вни</span></li>
        <li class="l2"><svg class="i8"><use href="#plus"/></svg><span>Высотная отметка - Закрашенное значен</span></li>
        <li class="l2"><svg class="i8"><use href="#plus"/></svg><span>Высотная отметка - Наружная, с заливкой</span></li>
        <li class="l2"><svg class="i8"><use href="#plus"/></svg><span>Высотная отметка - Перекрестье</span></li>
        <li class="l2"><svg class="i8"><use href="#plus"/></svg><span>Высотная отметка - Рамка</span></li>
        <li class="l2"><svg class="i8"><use href="#plus"/></svg><span>Высотная отметка - Стрелка</span></li>
        <li class="l2"><svg class="i8"><use href="#plus"/></svg><span>Заголовок разреза - Без стрелок</span></li>
        <li class="l2"><svg class="i8"><use href="#plus"/></svg><span>Заголовок разреза - Вид</span></li>
      </ul>
      <div class="vscroll"><svg class="i8"><use href="#chev-u"/></svg><i class="gap-a"></i><i class="thumb"></i><i class="gap-b"></i><svg class="i8"><use href="#chev-d"/></svg></div>
    </div>
    <div class="hscroll"><svg class="i8"><use href="#chev-l"/></svg><i class="thumb"></i><i class="rest"></i><svg class="i8"><use href="#chev-r"/></svg></div>
  </aside>

  <aside class="props">
    <h3 class="pane-head">Свойства<button aria-label="Закрыть"><svg class="i10"><use href="#x"/></svg></button></h3>
    <div class="type">
      <i class="thumbnail"></i>
      <p>Ось сетки<br>Вим марка в начале</p>
      <svg class="i8"><use href="#caret"/></svg>
    </div>
    <div class="type-row">
      <div class="pick"><select aria-label="Категория"><option>Новые Оси</option></select><svg class="i8"><use href="#chev-d"/></svg></div>
      <button class="edit-type"><svg class="i16"><use href="#edittype"/></svg>Изменить тип</button>
    </div>
    <h4>Границы<span><svg class="i6 flip"><use href="#caret"/></svg><svg class="i6 flip"><use href="#caret"/></svg></span></h4>
    <div class="prop"><label for="scope">Область видимо...</label><input id="scope" type="text" value="Нет"></div>
    <div class="blank"></div>
    <footer><a href="#help-props">Справка по свойствам</a><button disabled>Применить</button></footer>
  </aside>

  <section class="view">
    <nav class="doc-tabs" aria-label="Открытые виды">
      <button><svg class="i14"><use href="#sheet"/></svg>0 - Начальный вид</button>
      <button><svg class="i14"><use href="#sheet"/></svg>В_ОВ_Этаж 01_Сводный</button>
      <button><svg class="i14"><use href="#elev"/></svg>В_Южный фасад</button>
      <button><svg class="i14"><use href="#sheet"/></svg>В_ОВ_Этаж 01_Вентиляция</button>
      <button class="active"><svg class="i14"><use href="#sheet"/></svg>В_ОВ и ВК_Этаж 01_Сводный<svg class="i10"><use href="#x"/></svg></button>
      <svg class="i8 more"><use href="#caret"/></svg>
    </nav>
    <div class="stage">
      <div class="canvas">
        <svg class="drawing">
          <g fill="none">
            <path d="M6 309H821" stroke="#6f7f72" stroke-width="1.500" stroke-dasharray="19 20 20 20"/>
            <path d="M232 436V652" stroke="#777" stroke-width="1.500" stroke-dasharray="19 20 20 20"/>
            <path d="M232 339V0" stroke="#b9c8e6" stroke-width="4"/>
            <path d="M232 339V0" stroke="#33508c" stroke-width="2" stroke-dasharray="37 8 9 8"/>
            <path d="M232 347v9M232 364v26" stroke="#33508c" stroke-width="2"/>
            <path d="M296 339V0" stroke="#777" stroke-width="1.500" stroke-dasharray="37 8 9 8"/>
            <path d="M296 347v9M296 364v26" stroke="#666" stroke-width="1.500"/>
            <path d="M232 287H296" stroke="#8ea0cc" stroke-width="1.500"/>
            <path d="M296 390L401 283" stroke="#888" stroke-width="1.500"/>
            <path d="M236 390H392" stroke="#9db0d4" stroke-width="1.500" stroke-dasharray="6 5"/>
            <path d="M296 414v18M391 404v26M292 426h103M388 430l6-7M293 430l6-7" stroke="#9aa6d0" stroke-width="1.300"/>
            <path d="M395 383v18M385 392h20M388 385l5 5M388 400l5-5" stroke="#777" stroke-width="1.500"/>
            <path d="M259 294v8M270 294v8M259 298h11" stroke="#5e76b8" stroke-width="1.500"/>
            <circle cx="232" cy="401" r="12" fill="#e2e6f0" stroke="#3a4a7c" stroke-width="2"/>
            <circle cx="296" cy="401" r="12" stroke="#777" stroke-width="1.500"/>
            <path d="M296 368v22M293 373l6-3" stroke="#4d5584" stroke-width="2"/>
            <circle cx="296" cy="390" r="3.500" fill="#dfe5f2" stroke="#556a9c" stroke-width="1.300"/>
            <rect x="292" y="446" width="9" height="8" fill="#dfe5f2" stroke="#4a64a8" stroke-width="1.300"/>
            <path d="M294 450l2 2 4-5" stroke="#33508c" stroke-width="1.500"/>
            <rect x="402" y="278" width="9" height="7" fill="#a8c8e8" stroke="#3f6ea8" stroke-width="1.500"/>
            <path d="M404 278v-2a2.500 3 0 015 0v2" stroke="#3f6ea8" stroke-width="1.500"/>
          </g>
          <circle cx="232" cy="286" r="3" fill="#4a66aa"/><circle cx="296" cy="286" r="3" fill="#4a66aa"/>
          <text x="264" y="282" class="t-dim">2200.0</text>
          <text x="343" y="421" class="t-dim pale">3200.0</text>
          <text x="329" y="393" class="t-3d">3D</text>
          <text x="232" y="406" class="t-axis blue">1</text>
          <text x="296" y="406" class="t-axis">2</text>
        </svg>
        <div class="navbar">
          <i class="dot"></i>
          <svg class="i22"><use href="#wheel"/></svg>
          <svg class="i6"><use href="#caret"/></svg>
          <hr>
          <svg class="i16"><use href="#zoomr"/></svg>
          <svg class="i6"><use href="#caret"/></svg>
          <i class="dot low"></i>
        </div>
      </div>
      <div class="vscroll"><svg class="i8"><use href="#chev-u"/></svg><i class="grow"></i><i class="thumb"></i><i class="grow"></i><svg class="i8"><use href="#chev-d"/></svg></div>
    </div>
    <div class="viewbar">
      <span class="scale">1 : 100</span>
      <svg class="i14"><use href="#detail"/></svg>
      <svg class="i14"><use href="#visual"/></svg>
      <svg class="i14"><use href="#sun"/></svg>
      <svg class="i14"><use href="#shadow"/></svg>
      <svg class="i14"><use href="#crop"/></svg>
      <svg class="i14"><use href="#cropb"/></svg>
      <svg class="i14"><use href="#glasses"/></svg>
      <svg class="i10"><use href="#bulb"/></svg>
      <svg class="i14"><use href="#tmp"/></svg>
      <svg class="i14"><use href="#constr"/></svg>
      <svg class="i14"><use href="#region"/></svg>
      <div class="hscroll"><svg class="i8"><use href="#chev-l"/></svg><i class="grow"></i><i class="thumb"></i><i class="grow"></i><svg class="i8"><use href="#chev-r"/></svg></div>
    </div>
  </section>
</main>

<footer class="status">
  <span class="msg">ПРОДОЛЖЕНИЕ [Оси : Ось сетки : 1]</span>
  <svg class="i14"><use href="#press"/></svg>
  <div class="pick"><select aria-label="Рабочий набор"><option></option></select><svg class="i8"><use href="#chev-d"/></svg></div>
  <svg class="i14 sep-s"><use href="#angle"/></svg>
  <span class="count">:0</span>
  <svg class="i14"><use href="#sched"/></svg>
  <svg class="i14"><use href="#legend"/></svg>
  <div class="pick"><select aria-label="Вариант конструкции"><option>Главная модель</option></select><svg class="i8"><use href="#chev-d"/></svg></div>
  <span class="right"><svg class="i14"><use href="#filter"/></svg><svg class="i14"><use href="#selx"/></svg></span>
</footer>

<div class="stream">
  <div class="stream-head"><span>Идет трансляция</span><svg class="i8"><use href="#caret"/></svg></div>
  <div class="stream-body"><button>Пауза</button></div>
</div>
</body>
</html>
```
FILE: styles.css
```css
* { box-sizing: border-box; }
html, body { height: 100%; margin: 0; }
body {
  display: flex;
  flex-direction: column;
  overflow: hidden;
  background: #e8e8e8;
  color: #484848;
  font: 10px/14px "Open Sans", "Noto Sans", sans-serif;
}
button, input, select { font: inherit; color: inherit; margin: 0; padding: 0; border: 0; background: none; border-radius: 0; }
input, select { min-width: 0; }
svg { display: block; flex: none; }
h2, h3, h4, p, ul { margin: 0; padding: 0; font: inherit; }
i { display: block; }
.sprite { position: absolute; width: 0; height: 0; }
.i6 { width: 6px; height: 6px; }
.i8 { width: 8px; height: 8px; }
.i10 { width: 10px; height: 10px; }
.i12 { width: 12px; height: 12px; }
.i13 { width: 13px; height: 12px; }
.i14 { width: 14px; height: 14px; }
.i16 { width: 16px; height: 16px; }
.i22 { width: 22px; height: 22px; }
.i28 { width: 28px; height: 28px; }
.flip { transform: scaleY(-1); }
.sep { margin-left: 8px; }
.sep-s { margin-left: 4px; }

/* title bar */
.titlebar { flex: none; height: 17px; display: flex; align-items: flex-end; overflow: hidden; background: #bebebe; }
.title-row { flex: 1; height: 26px; display: flex; align-items: center; }
.qat { display: flex; align-items: center; gap: 4px; padding-left: 2px; }
.app-title { flex: 1; text-align: center; white-space: nowrap; }
.infocenter { display: flex; align-items: center; gap: 4px; padding-right: 7px; }
.search { width: 150px; height: 18px; padding: 0 4px; background: #ececec; border: 1px solid #777; font-style: italic; font-size: 9px; }
.search::placeholder { color: #888; }
.username { width: 66px; color: #666; font-size: 9px; }
.trial { display: flex; align-items: center; gap: 2px; width: 33px; height: 18px; padding: 0 4px; background: #4f83cc; color: #eee; }

/* ribbon tabs */
.tabs { flex: none; height: 18px; display: flex; gap: 1px; background: #bdbdbd; }
.tab { padding: 0 7px; white-space: nowrap; color: #555; }
.tab.file { width: 40px; margin-right: 2px; background: #2f6fb8; color: #e6eef8; font-weight: 600; }
.tab.active { background: #d5dbc4; color: #3e4338; }
.tab-toggle { margin-left: auto; display: flex; align-items: center; gap: 3px; padding-right: 5px; }
.pill { width: 13px; height: 7px; border: 1px solid #888; border-radius: 2px; background: #d5d5d5; }

/* ribbon */
.ribbon { flex: none; height: 80px; display: flex; background: #d3d9c4; border-bottom: 1px solid #c4cab6; }
.panel { flex: none; display: flex; flex-direction: column; padding-top: 2px; background: #e4e4e4; }
.tools { flex: 1; display: flex; }
.col { flex-direction: column; align-items: center; }
.panel h2 { height: 17px; display: flex; justify-content: center; align-items: center; gap: 4px; white-space: nowrap; }
.p-pick { width: 55px; }
.p-props { width: 52px; }
.p-clip { width: 86px; }
.p-geo { width: 142px; }
.p-mod { width: 205px; }
.p-view { width: 52px; }
.p-meas { width: 56px; }
.p-make { width: 70px; }
.p-draw { width: 206px; background: none; }
.big { display: flex; flex-direction: column; align-items: center; line-height: 16px; white-space: nowrap; }
.bigicon { width: 28px; height: 28px; margin: 2px 0; }
.dim { color: #b4b4b4; }
.toggle { width: 34px; height: 30px; display: grid; place-items: center; }
.toggle.on { background: #b4cdec; border: 1px solid #7fa5d4; }
.p-clip .tools { padding-left: 10px; gap: 10px; }
.small-grid { display: grid; grid-auto-rows: 20px; align-content: start; place-items: center; }
.three { grid-template-columns: 20px 20px 10px; }
.cmds { width: 88px; padding-left: 4px; }
.cmds button { display: flex; align-items: center; gap: 4px; height: 20px; white-space: nowrap; }
.big-grid { display: grid; grid-auto-rows: 30px; align-content: start; place-items: center; }
.four { grid-template-columns: repeat(4, 33px); padding-left: 4px; }
.cells { grid-template-columns: repeat(3, 22px); }
.viewgrid { grid-template-columns: 22px 6px 24px; }
.meas { grid-template-columns: 28px 12px; padding-left: 10px; }
.two { grid-template-columns: 32px 32px; padding-left: 3px; }
.p-draw .tools { margin-left: 6px; background: #dfe0da; }
.p-draw h2 { padding-left: 2px; }
.gallery { width: 94px; display: flex; gap: 1px; align-items: flex-start; padding-top: 2px; border: 1px solid #d2d3cc; }
.gallery button { width: 18px; height: 18px; display: grid; place-items: center; }
.gallery .on { background: #bcd6f0; border: 1px solid #6f9fd0; }
.gal-scroll { width: 11px; display: flex; flex-direction: column; }
.gal-scroll button { flex: 1; display: grid; place-items: center; border: 1px solid #cfd0ca; background: #e6e6e4; }
.multi { flex: 1; }

/* options bar */
.options { flex: none; height: 24px; display: flex; align-items: center; background: #d3d9c4; }
.mode { width: 175px; padding-left: 7px; border-right: 1px solid #b9bfac; }
.options label { width: 70px; padding-left: 15px; white-space: nowrap; }
.options input { width: 100px; height: 18px; padding: 0 4px; background: #eee; border: 1px solid #ccc; }

/* work area */
.work { flex: 1; min-height: 0; display: flex; }
.pane-head { flex: none; height: 18px; display: flex; align-items: center; justify-content: space-between; padding: 0 4px 0 2px; background: #d9d9d9; white-space: nowrap; }
.browser { flex: none; width: 267px; display: flex; flex-direction: column; border-right: 4px solid #d2d2d2; }
.browser .pane-head { padding-right: 2px; }
.tree-wrap { flex: 1; min-height: 0; display: flex; }
.tree {
  flex: 1; min-width: 0; display: flex; flex-direction: column; overflow: hidden; list-style: none;
  background:
    linear-gradient(#d6d6d6, #d6d6d6) 7px 0 / 1px 100% no-repeat,
    linear-gradient(#d6d6d6, #d6d6d6) 25px 0 / 1px 100% no-repeat,
    #eaeaea;
}
.tree li { flex: 1 1 0; min-height: 0; display: flex; align-items: center; white-space: nowrap; overflow: hidden; }
.tree .l0 { padding-left: 4px; gap: 6px; }
.nobox { width: 8px; }
.tree .l1 { padding-left: 21px; gap: 10px; }
.tree .l2 { padding-left: 38px; gap: 10px; }
.sel span { background: #d2d2d2; }
.vscroll { flex: none; display: flex; flex-direction: column; align-items: center; padding: 4px 0; background: #dedede; }
.vscroll .thumb { width: 12px; background: #bcbcbc; }
.tree-wrap .vscroll { width: 13px; }
.tree-wrap .thumb { flex: 198; }
.gap-a { flex: 122; }
.gap-b { flex: 315; }
.hscroll { display: flex; align-items: center; background: #dedede; }
.hscroll .thumb { height: 12px; background: #bcbcbc; }
.browser .hscroll { flex: none; height: 16px; padding: 0 16px 0 4px; gap: 3px; }
.browser .hscroll .thumb { flex: 142; }
.rest { flex: 78; }
.grow { flex: 1; }

/* properties */
.props { flex: none; width: 206px; display: flex; flex-direction: column; background: #dedede; border-right: 3px solid #cfcfcf; }
.type { height: 60px; display: flex; align-items: center; padding: 2px 0 2px 4px; }
.thumbnail { width: 55px; height: 55px; background: #dadada; border: 1px solid #d0d0d0; }
.type p { flex: 1; padding-left: 4px; }
.type-row { height: 22px; display: flex; align-items: center; gap: 4px; padding-left: 2px; }
.pick { display: grid; align-items: center; }
.pick select, .pick svg { grid-area: 1 / 1; }
.pick select { width: 100%; height: 100%; appearance: none; padding: 0 4px; }
.pick svg { justify-self: end; margin-right: 4px; pointer-events: none; }
.type-row .pick { width: 107px; height: 20px; background: #e2e2e2; border: 1px solid #cacaca; }
.edit-type { display: flex; align-items: center; gap: 3px; white-space: nowrap; }
.props h4 { height: 14px; display: flex; justify-content: space-between; align-items: center; padding: 0 4px 0 3px; background: #cdcdcd; line-height: 13px; }
.prop { height: 16px; display: flex; align-items: center; padding: 0 9px 0 8px; background: #e6e6e6; }
.prop label { width: 89px; white-space: nowrap; }
.prop input { flex: 1; height: 15px; padding: 0 2px; background: #ededed; border: 2px solid #777; line-height: 11px; }
.blank { flex: 1; background: #ebebeb; }
.props footer { height: 23px; display: flex; align-items: center; justify-content: space-between; padding: 0 7px 0 3px; }
.props a { color: #4478bc; }
.props footer button { color: #aaa; }

/* view */
.view { flex: 1; min-width: 0; display: flex; flex-direction: column; padding-right: 2px; background: #dfe0e6; }
.doc-tabs { flex: none; height: 19px; display: flex; background: #bebebe; }
.doc-tabs button { display: flex; align-items: center; gap: 5px; padding: 0 15px 0 5px; color: #6a6a6a; white-space: nowrap; }
.doc-tabs .active { background: #e6e6e6; color: #3c3c3c; font-weight: 600; padding: 0 4px 0 5px; }
.more { margin: 6px 4px 0 auto; }
.stage { flex: 1; min-height: 0; display: flex; }
.canvas { position: relative; flex: 1; min-width: 0; background: #e9e9e9; }
.drawing { width: 100%; height: 100%; }
.drawing text { text-anchor: middle; }
.t-dim { font-size: 9px; fill: #5468a8; }
.pale { fill: #8d9acb; }
.t-3d { font-size: 8px; font-weight: 700; fill: #35559c; }
.t-axis { font-size: 13px; fill: #666; }
.blue { fill: #3a4a7c; }
.navbar {
  position: absolute; top: 2px; right: 1px; width: 29px; height: 98px;
  display: flex; flex-direction: column; align-items: center; gap: 3px; padding: 3px;
  border: 2px solid #cacaca; border-radius: 4px; background: #e4e4e4;
}
.navbar .i6 { opacity: 0.5; }
.navbar hr { width: 100%; margin: 0; border: 0; border-top: 1px solid #c8c8c8; }
.dot { align-self: flex-end; width: 6px; height: 6px; border-radius: 50%; background: #c4c4c4; }
.low { margin-top: auto; }
.stage .vscroll { width: 15px; }
.stage .thumb { height: 15px; }
.viewbar { flex: none; height: 19px; display: flex; align-items: center; gap: 4px; background: #dcdcdc; }
.scale { width: 64px; padding-left: 23px; white-space: nowrap; }
.viewbar .hscroll { flex: 1; height: 19px; padding-right: 16px; }
.viewbar .thumb { width: 14px; }

/* status bar */
.status { flex: none; height: 22px; display: flex; align-items: center; gap: 6px; background: #b4b4b4; border-bottom: 2px solid #b09a62; }
.msg { width: 464px; white-space: nowrap; }
.status .pick { width: 173px; height: 16px; background: #e3e3e3; color: #888; }
.count { width: 16px; }
.right { margin-left: auto; padding-right: 172px; display: flex; gap: 8px; }

/* broadcast overlay */
.stream { position: fixed; right: 19px; bottom: 0; width: 156px; height: 28px; background: #d6b548; border: 1px solid #77724f; border-bottom: 0; overflow: hidden; }
.stream-head { height: 16px; display: flex; align-items: center; padding: 0 4px; background: #6c6f80; color: #d5d5dc; }
.stream-head span { flex: 1; text-align: center; }
.stream-head svg { filter: brightness(3); }
.stream-body { display: flex; justify-content: center; padding-top: 5px; }
.stream-body button { width: 91px; height: 18px; background: #e2e0cd; color: #555; }
```
